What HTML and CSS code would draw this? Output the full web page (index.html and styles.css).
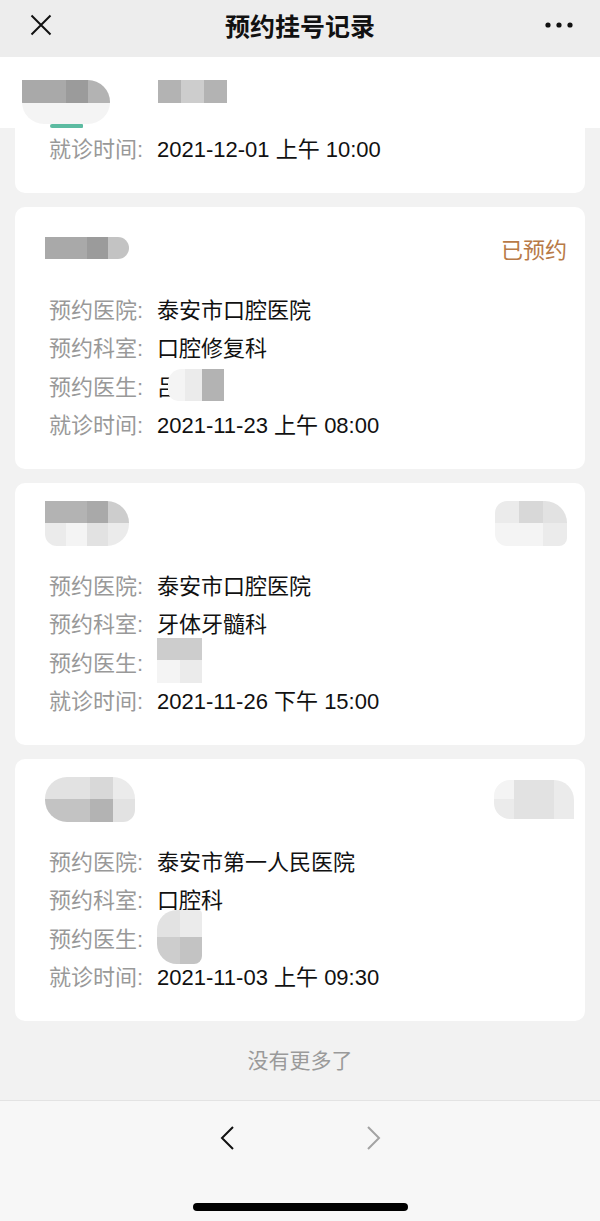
FILE: index.html
```html
<!DOCTYPE html>
<html>
<head>
  <meta charset="UTF-8">
  <title>预约挂号记录</title>
  <link rel="stylesheet" href="styles.css">
</head>
<body>
  <div class="nav">
    <div class="nav-left">
      <svg width="22" height="22" viewBox="0 0 22 22"><path d="M1.5 1.5 L20.5 20.5 M20.5 1.5 L1.5 20.5" stroke="#111" stroke-width="2" fill="none"/></svg>
    </div>
    <div class="nav-title">预约挂号记录</div>
    <div class="nav-right">
      <svg width="28" height="6" viewBox="0 0 28 6"><circle cx="3" cy="3" r="2.6" fill="#111"/><circle cx="14" cy="3" r="2.6" fill="#111"/><circle cx="25" cy="3" r="2.6" fill="#111"/></svg>
    </div>
  </div>

  <div class="tabs">
    <div class="tab">
      <div class="mosaic m-tab1">
        <span class="s2"></span><span class="s2"></span><span class="s1"></span><span class="s3"></span>
        <span class="s9"></span><span class="s9"></span><span class="s9"></span><span class="s9"></span>
      </div>
      <div class="tab-line"></div>
    </div>
    <div class="tab">
      <div class="mosaic m-tab2">
        <span class="s3"></span><span class="s5"></span><span class="s3"></span>
      </div>
    </div>
  </div>

  <div class="list">
    <div class="card card-cut">
      <div class="row"><span class="label">就诊时间:</span><span class="value">2021-12-01 上午 10:00</span></div>
    </div>

    <div class="card">
      <div class="card-head">
        <div class="mosaic name m-name2">
          <span class="s2"></span><span class="s2"></span><span class="s1"></span><span class="s4"></span>
        </div>
        <span class="status">已预约</span>
      </div>
      <div class="row"><span class="label">预约医院:</span><span class="value">泰安市口腔医院</span></div>
      <div class="row"><span class="label">预约科室:</span><span class="value">口腔修复科</span></div>
      <div class="row"><span class="label">预约医生:</span><span class="value">吕</span><div class="mosaic m-doc2"><span class="s9"></span><span class="s8"></span><span class="s3"></span></div></div>
      <div class="row"><span class="label">就诊时间:</span><span class="value">2021-11-23 上午 08:00</span></div>
    </div>

    <div class="card">
      <div class="card-head">
        <div class="mosaic name m-name3">
          <span class="s3"></span><span class="s3"></span><span class="s2"></span><span class="s5"></span>
          <span class="s8"></span><span class="s9"></span><span class="s7"></span><span class="s8"></span>
        </div>
        <div class="mosaic m-right3">
          <span class="s8"></span><span class="s6"></span><span class="s7"></span>
          <span class="s9"></span><span class="s9"></span><span class="s8"></span>
        </div>
      </div>
      <div class="row"><span class="label">预约医院:</span><span class="value">泰安市口腔医院</span></div>
      <div class="row"><span class="label">预约科室:</span><span class="value">牙体牙髓科</span></div>
      <div class="row"><span class="label">预约医生:</span><div class="mosaic m-doc3"><span class="s5"></span><span class="s5"></span><span class="s9"></span><span class="s8"></span></div></div>
      <div class="row"><span class="label">就诊时间:</span><span class="value">2021-11-26 下午 15:00</span></div>
    </div>

    <div class="card">
      <div class="card-head">
        <div class="mosaic name m-name4">
          <span class="s7"></span><span class="s7"></span><span class="s6"></span><span class="s8"></span>
          <span class="s4"></span><span class="s4"></span><span class="s3"></span><span class="s7"></span>
        </div>
        <div class="mosaic m-right4">
          <span class="s9"></span><span class="s7"></span><span class="s7"></span><span class="s8"></span>
          <span class="s8"></span><span class="s7"></span><span class="s7"></span><span class="s8"></span>
        </div>
      </div>
      <div class="row"><span class="label">预约医院:</span><span class="value">泰安市第一人民医院</span></div>
      <div class="row"><span class="label">预约科室:</span><span class="value">口腔科</span></div>
      <div class="row"><span class="label">预约医生:</span><div class="mosaic m-doc4"><span class="s7"></span><span class="s8"></span><span class="s5"></span><span class="s4"></span></div></div>
      <div class="row"><span class="label">就诊时间:</span><span class="value">2021-11-03 上午 09:30</span></div>
    </div>
  </div>

  <div class="no-more">没有更多了</div>

  <div class="toolbar">
    <div class="arrows">
      <svg width="14" height="24" viewBox="0 0 14 24"><path d="M13 1 L2 12 L13 23" stroke="#111" stroke-width="2" fill="none"/></svg>
      <svg width="14" height="24" viewBox="0 0 14 24"><path d="M1 1 L12 12 L1 23" stroke="#a3a3a3" stroke-width="2" fill="none"/></svg>
    </div>
    <div class="home-bar"></div>
  </div>
</body>
</html>
```
FILE: styles.css
```css
body { margin: 0; background: #f2f2f2; font-family: "Liberation Sans", "Noto Sans CJK SC", sans-serif; color: #111; }

.nav { height: 57px; padding-bottom: 7px; box-sizing: border-box; background: #ededed; display: flex; align-items: center; }
.nav-left { width: 80px; padding-left: 30px; box-sizing: border-box; display: flex; align-items: center; }
.nav-title { flex: 1; text-align: center; font-size: 25px; font-weight: 600; }
.nav-right { width: 80px; padding-right: 27px; box-sizing: border-box; display: flex; justify-content: flex-end; }

.tabs { height: 71px; background: #fff; display: flex; padding-left: 22px; gap: 48px; }
.tab { display: flex; flex-direction: column; align-items: center; padding-top: 23px; }
.tab-line { margin-top: auto; width: 33px; height: 4px; background: #5cbba1; border-radius: 2px 1px 1px 2px; }

.mosaic { display: grid; overflow: hidden; flex: none; }
.mosaic span { display: block; }
.mosaic.name { margin-left: -4px; }
.s1 { background: #9b9b9b; }
.s2 { background: #a9a9a9; }
.s3 { background: #b3b3b3; }
.s4 { background: #c3c3c3; }
.s5 { background: #cdcdcd; }
.s6 { background: #d8d8d8; }
.s7 { background: #e2e2e2; }
.s8 { background: #ebebeb; }
.s9 { background: #f4f4f4; }

.m-tab1 { grid-template-columns: repeat(4, 22px); grid-template-rows: 23px 21px; border-radius: 0 22px 22px 22px; }
.m-tab2 { grid-template-columns: repeat(3, 23px); grid-template-rows: 23px; }
.m-name2 { grid-template-columns: repeat(4, 21px); grid-template-rows: 22px; border-radius: 0 11px 11px 0; }
.m-name3 { grid-template-columns: repeat(4, 21px); grid-template-rows: 22px 23px; border-radius: 0 22px 22px 12px; }
.m-right3 { grid-template-columns: repeat(3, 24px); grid-template-rows: 22px 23px; border-radius: 12px 22px 8px 12px; }
.m-name4 { grid-template-columns: repeat(4, 22.5px); grid-template-rows: 22px 23px; border-radius: 22px 22px 12px 22px; }
.m-right4 { grid-template-columns: repeat(4, 20px); grid-template-rows: 19px 20px; border-radius: 16px 20px 0 16px; margin-right: -7px; }
.m-doc2 { grid-template-columns: 17px 17px 22px; grid-template-rows: 32px; border-radius: 14px 0 0 10px; margin-left: -11px; }
.m-doc3 { grid-template-columns: repeat(2, 22.5px); grid-template-rows: 22px 23px; }
.m-doc4 { grid-template-columns: repeat(2, 22.5px); grid-template-rows: 27px 27px; border-radius: 20px 4px 8px 20px; }

.list { padding: 0 15px; display: flex; flex-direction: column; gap: 14px; }
.card { background: #fff; border-radius: 10px; padding: 0 18px 26px 34px; }
.card-cut { border-radius: 0 0 10px 10px; }
.card-head { height: 82px; display: flex; align-items: center; justify-content: space-between; }
.status { font-size: 22px; color: #b87a47; }

.row { height: 38.5px; display: flex; align-items: center; font-size: 22px; }
.label { width: 108px; flex: none; color: #999; }
.value { color: #111; white-space: nowrap; }

.no-more { height: 79px; text-align: center; line-height: 79px; font-size: 21px; color: #9a9a9a; }

.toolbar { background: #f7f7f7; border-top: 1px solid #e3e3e3; display: flex; flex-direction: column; align-items: center; }
.arrows { height: 74px; display: flex; align-items: center; gap: 133px; }
.home-bar { width: 215px; height: 8px; border-radius: 4px; background: #000; margin: 28px 0 10px; }
```
